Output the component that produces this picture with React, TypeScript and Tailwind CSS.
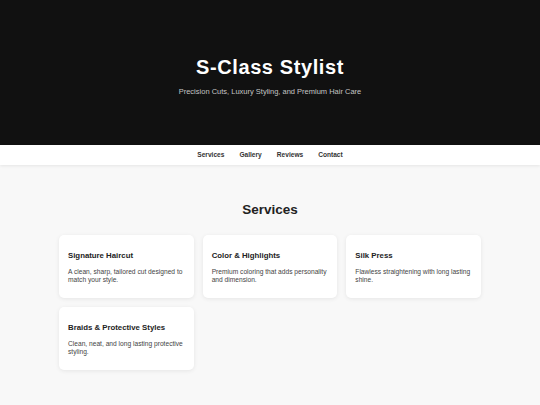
import React, { FC } from "react";

const services = [
  { title: "Signature Haircut", text: "A clean, sharp, tailored cut designed to match your style." },
  { title: "Color & Highlights", text: "Premium coloring that adds personality and dimension." },
  { title: "Silk Press", text: "Flawless straightening with long lasting shine." },
  { title: "Braids & Protective Styles", text: "Clean, neat, and long lasting protective styling." },
];

const App: FC = () => {
  return (
    <div className="min-h-[405px] bg-[#f8f8f8] font-['Liberation_Sans',Arial,sans-serif]">
      <header className="flex h-[145px] flex-col items-center bg-[#111111] pt-[55px] text-center">
        <h1 className="text-[20px] leading-[24px] font-bold tracking-[0.6px] text-white">S-Class Stylist</h1>
        <p className="mt-[8px] text-[7.5px] leading-[10px] text-[#c4c4c4]">
          Precision Cuts, Luxury Styling, and Premium Hair Care
        </p>
      </header>

      <nav className="flex h-[20px] items-center justify-center gap-[15px] bg-white shadow-[0_1px_3px_rgba(0,0,0,0.08)]">
        {["Services", "Gallery", "Reviews", "Contact"].map((item) => (
          <a key={item} className="text-[6.6px] font-bold text-[#333333]">
            {item}
          </a>
        ))}
      </nav>

      <main className="px-[59px] pt-[37px] pb-[30px]">
        <h2 className="text-center text-[13.5px] leading-[16px] font-bold text-[#222222]">Services</h2>
        <div className="mt-[17px] grid grid-cols-3 gap-[9px]">
          {services.map((s) => (
            <div
              key={s.title}
              className="rounded-[5px] bg-white pt-[16px] pr-[8px] pb-[14px] pl-[9px] shadow-[0_1px_4px_rgba(0,0,0,0.08)]"
            >
              <h3 className="text-[7.8px] leading-[10px] font-bold text-[#222222]">{s.title}</h3>
              <p className="mt-[7px] text-[6.65px] leading-[8px] text-[#444444]">{s.text}</p>
            </div>
          ))}
        </div>
      </main>
    </div>
  );
};

export default App;
